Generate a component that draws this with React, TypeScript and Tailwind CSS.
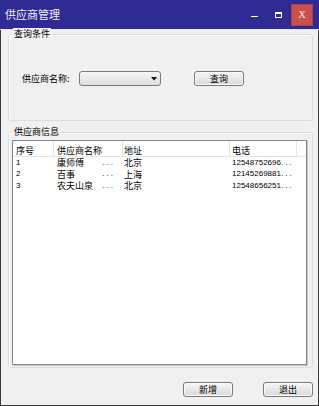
import React from "react";

type Row = { id: string; name: string; addr: string; phone: string };

const rows: Row[] = [
  { id: "1", name: "康师傅", addr: "北京", phone: "12548752696" },
  { id: "2", name: "百事", addr: "上海", phone: "12145269881" },
  { id: "3", name: "农夫山泉", addr: "北京", phone: "12548656251" },
];

const font = { fontFamily: '"Noto Sans CJK SC", "Liberation Sans", sans-serif' };
const latin = { fontFamily: '"Liberation Sans", sans-serif' };

function WinButton({ children }: { children: React.ReactNode }) {
  return (
    <button className="w-[50px] h-[15px] rounded-[3px] border border-[#7a7a7a] bg-gradient-to-b from-[#f7f7f7] to-[#d9d9d9] shadow-[inset_0_0_0_1px_#fbfbfb] flex items-center justify-center text-[9px] leading-none text-black">
      {children}
    </button>
  );
}

function Group({ title, className, children }: { title: string; className: string; children: React.ReactNode }) {
  return (
    <div className={`relative w-[305px] rounded-[3px] border border-[#d5dfe5] shadow-[inset_1px_1px_0_#fff] ${className}`}>
      <span className="absolute left-[4px] top-[-7px] bg-[#f0f0f0] px-[1px] text-[9px] leading-[12px] text-black">
        {title}
      </span>
      {children}
    </div>
  );
}

export default function App() {
  return (
    <div className="w-[319px] h-[406px] flex flex-col bg-[#f0f0f0]" style={font}>
      <div className="h-[29px] bg-[#302a94] flex items-center shrink-0">
        <span className="pl-[5px] text-[11px] text-[#eef] leading-none">供应商管理</span>
        <div className="ml-auto flex items-center">
          <span className="w-[7px] h-[1px] bg-white mt-[3px]" />
          <span className="ml-[17px] w-[7px] h-[6px] border border-white border-t-2" />
          <div className="ml-[9px] mr-[6px] w-[22px] h-[22px] bg-[#c8514f] border border-[#b0403e] flex items-center justify-center">
            <span className="text-[10px] leading-none text-[#fbe6e6]" style={{ fontFamily: '"Liberation Serif", serif' }}>
              X
            </span>
          </div>
        </div>
      </div>
      <div className="h-[1px] bg-[#dfe6ee] shrink-0" />
      <div className="flex-1 flex flex-col pl-[7px] border-l border-r border-b border-[#3a3a3a]">
        <Group title="查询条件" className="mt-[4px] h-[87px]">
          <div className="flex items-center mt-[36px] ml-[13px]">
            <span className="w-[57px] text-[9px] leading-none text-black">供应商名称:</span>
            <div className="w-[82px] h-[15px] rounded-[3px] border border-[#7a7a7a] bg-gradient-to-b from-[#f7f7f7] to-[#dddddd] flex items-center justify-end pr-[3px]">
              <svg width="6" height="4" viewBox="0 0 6 4">
                <path d="M0 0 H6 L3 3.5 Z" fill="#111" />
              </svg>
            </div>
            <div className="ml-[33px] -mt-[1px]">
              <WinButton>查询</WinButton>
            </div>
          </div>
        </Group>

        <Group title="供应商信息" className="mt-[11px] h-[236px]">
          <div className="ml-[3px] mt-[7px] w-[295px] h-[225px] border border-[#828790] shadow-[1px_1px_0_#c4c4c4] bg-white flex flex-col">
            <div className="h-[16px] flex border-b border-[#e5e5e5] text-[9px] leading-none text-black">
              <div className="w-[41px] pl-[3px] pt-[5px] border-r border-[#e5e5e5]">序号</div>
              <div className="w-[69px] pl-[3px] pt-[5px] border-r border-[#e5e5e5]">供应商名称</div>
              <div className="w-[107px] pl-[1px] pt-[5px] border-r border-[#e5e5e5]">地址</div>
              <div className="w-[67px] pl-[2px] pt-[5px] border-r border-[#e5e5e5]">电话</div>
              <div className="flex-1" />
            </div>
            {rows.map((r) => (
              <div key={r.id} className="h-[11.5px] flex items-center text-[9px] leading-none text-black">
                <div className="w-[41px] pl-[3px] text-[8px]" style={latin}>
                  {r.id}
                </div>
                <div className="w-[69px] pl-[3px] flex items-center">
                  <span>{r.name}</span>
                  <span className="ml-auto mr-[8px] text-[8px] tracking-[2px] text-black" style={latin}>
                    ...
                  </span>
                </div>
                <div className="w-[107px] pl-[1px]">{r.addr}</div>
                <div className="w-[67px] pl-[2px] text-[8px] whitespace-nowrap" style={latin}>
                  {r.phone}
                  <span className="tracking-[2px]">...</span>
                </div>
              </div>
            ))}
          </div>
        </Group>

        <div className="w-[305px] mt-[14px] flex justify-end gap-[30px]">
          <WinButton>新增</WinButton>
          <WinButton>退出</WinButton>
        </div>
      </div>
    </div>
  );
}
